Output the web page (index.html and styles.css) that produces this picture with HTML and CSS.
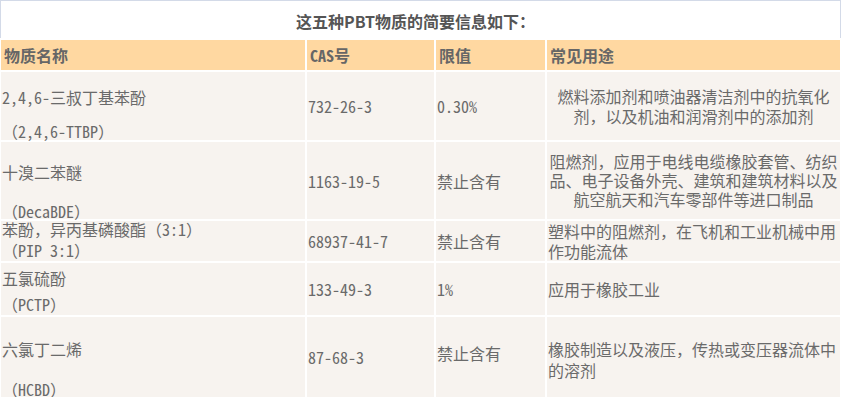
FILE: index.html
```html
<!DOCTYPE html>
<html lang="zh-CN">
<head>
<meta charset="utf-8">
<title>PBT物质简要信息</title>
<link rel="stylesheet" href="styles.css">
</head>
<body>
<div class="frame">
  <div class="title">这五种PBT物质的简要信息如下：</div>
  <table class="pbt">
    <colgroup>
      <col class="c1"><col class="c2"><col class="c3"><col class="c4">
    </colgroup>
    <thead>
      <tr class="head"><th>物质名称</th><th>CAS号</th><th>限值</th><th>常见用途</th></tr>
    </thead>
    <tbody>
      <tr class="r1">
        <td class="name"><div class="cn">2,4,6-三叔丁基苯酚</div><div class="en">（2,4,6-TTBP）</div></td>
        <td>732-26-3</td>
        <td>0.30%</td>
        <td class="use center">燃料添加剂和喷油器清洁剂中的抗氧化剂，以及机油和润滑剂中的添加剂</td>
      </tr>
      <tr class="r2">
        <td class="name"><div class="cn">十溴二苯醚</div><div class="en">（DecaBDE）</div></td>
        <td>1163-19-5</td>
        <td>禁止含有</td>
        <td class="use center tight">阻燃剂，应用于电线电缆橡胶套管、纺织品、电子设备外壳、建筑和建筑材料以及航空航天和汽车零部件等进口制品</td>
      </tr>
      <tr class="r3">
        <td class="name"><div class="cn">苯酚，异丙基磷酸酯（3:1）</div><div class="en">（PIP 3:1）</div></td>
        <td>68937-41-7</td>
        <td>禁止含有</td>
        <td class="use">塑料中的阻燃剂，在飞机和工业机械中用作功能流体</td>
      </tr>
      <tr class="r4">
        <td class="name"><div class="cn">五氯硫酚</div><div class="en">（PCTP）</div></td>
        <td>133-49-3</td>
        <td>1%</td>
        <td class="use">应用于橡胶工业</td>
      </tr>
      <tr class="r5">
        <td class="name"><div class="cn">六氯丁二烯</div><div class="en">（HCBD）</div></td>
        <td>87-68-3</td>
        <td class="lift">禁止含有</td>
        <td class="use wide">橡胶制造以及液压，传热或变压器流体中的溶剂</td>
      </tr>
    </tbody>
  </table>
</div>
</body>
</html>
```

FILE: styles.css
```css
html, body {
  margin: 0;
  padding: 0;
  background: #ffffff;
}

body {
  width: 842px;
  height: 397px;
  overflow: hidden;
  font-family: "Noto Sans Mono CJK SC", "Noto Sans CJK SC", "Liberation Mono", monospace;
  font-size: 16px;
  color: #6a6a6a;
}

.frame {
  width: 840px;
  border-left: 1px solid #d3dae8;
  border-top: 1px solid #d3dae8;
}

.title {
  width: 840px;
  height: 39px;
  border-right: 1px solid #d3dae8;
  box-sizing: border-box;
  padding-right: 10px;
  display: flex;
  align-items: center;
  justify-content: center;
  font-family: "Noto Sans CJK SC", "Noto Sans", sans-serif;
  font-weight: 700;
  font-size: 16px;
  color: #555555;
}

.pbt {
  width: 843px;
  margin: -2px 0 0 -2px;
  border-collapse: separate;
  border-spacing: 2px;
  table-layout: fixed;
  background: #ffffff;
}

.c1 { width: 304px; }
.c2 { width: 127px; }
.c3 { width: 109px; }
.c4 { width: 293px; }

.head { height: 30px; }

.head th {
  padding: 0 3px;
  background: #ffd8a1;
  text-align: left;
  font-weight: 700;
  line-height: 20px;
  color: #666666;
  vertical-align: middle;
}

td {
  padding: 0 1px;
  background: #f7f3ef;
  vertical-align: middle;
  line-height: 20px;
  text-align: left;
}

.r1 { height: 68px; }
.r2 { height: 77px; }
.r3 { height: 37px; }
.r4 { height: 52px; }
.r5 { height: 80px; }

td.name {
  vertical-align: top;
  line-height: 14px;
  white-space: nowrap;
}

.r1 .name { padding-top: 18px; }
.r1 .en { margin-top: 20px; }
.r2 .name { padding-top: 23px; }
.r2 .en { margin-top: 25px; }
.r3 .name { padding-top: 1px; }
.r3 .en { margin-top: 7px; }
.r4 .name { padding-top: 8px; }
.r4 .en { margin-top: 12px; }
.r5 .name { padding-top: 25px; }
.r5 .en { margin-top: 26px; }

td.center { text-align: center; }
td.tight { line-height: 19px; }
td.wide { line-height: 21px; padding-top: 6px; }
td.lift { padding-bottom: 8px; }
```
